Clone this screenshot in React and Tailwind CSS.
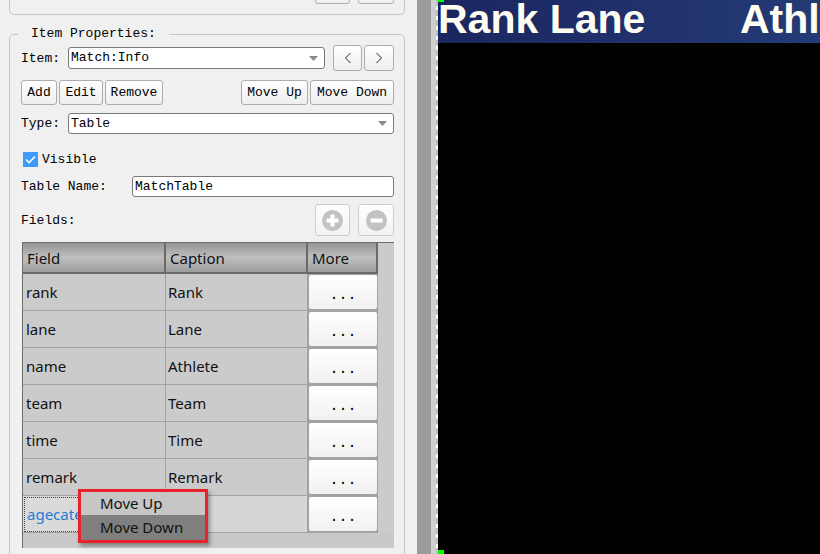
import React from 'react';

const mono = "font-['Liberation_Mono',monospace] text-[13px] text-black";
const ui = "font-['Noto_Sans',sans-serif]";

const Btn = ({ className = '', children }) => (
    <button className={`flex items-center justify-center rounded-[3px] border border-[#adadad] bg-linear-to-b from-[#fefefe] to-[#efefef] ${mono} ${className}`}>
        {children}
    </button>
);

const Combo = ({ value, className = '' }) => (
    <div className={`flex items-center rounded-[3px] border border-[#7a7a7a] bg-white pl-[2px] pr-[6px] ${className}`}>
        <span className={`flex-1 ${mono}`}>{value}</span>
        <svg width="9" height="5" viewBox="0 0 9 5"><path d="M0 0h9L4.5 5z" fill="#8a8a8a" /></svg>
    </div>
);

const RoundIcon = ({ plus }) => (
    <svg width="21" height="21" viewBox="0 0 21 21">
        <circle cx="10.5" cy="10.5" r="10.5" fill="#c2c2c2" />
        <rect x="4.5" y="8.5" width="12" height="4" fill="#fff" />
        {plus && <rect x="8.5" y="4.5" width="4" height="12" fill="#fff" />}
    </svg>
);

const fields = [
    ['rank', 'Rank'],
    ['lane', 'Lane'],
    ['name', 'Athlete'],
    ['team', 'Team'],
    ['time', 'Time'],
    ['remark', 'Remark'],
];

const MoreCell = () => (
    <div className="h-[37px] bg-[#a3a3a3] p-[1px] pb-[2px]">
        <div className="flex h-full items-center justify-center rounded-[2px] bg-linear-to-b from-white to-[#f1f1f1] pt-[6px]">
            <span className="font-['Liberation_Mono',monospace] text-[15px] leading-none text-black">...</span>
        </div>
    </div>
);

const FieldsTable = () => (
    <div className={`ml-[1px] mt-[6px] h-[306px] w-[372px] border-l border-t border-[#6e6e6e] bg-[#c9c9c9] ${ui}`}>
        <div className="grid grid-cols-[143px_142px_70px_1fr]">
            {['Field', 'Caption', 'More'].map((h) => (
                <div key={h} className="flex h-[31px] items-center border-r-2 border-b-2 border-[#6a6a6a] bg-linear-to-b from-[#959595] via-[#bfbfbf] to-[#9d9d9d] pl-[4px] pt-[2px] text-[15px] text-[#111]">
                    {h}
                </div>
            ))}
            <div className="h-[31px] bg-[#cbcbcb]" />
            {fields.map(([f, c]) => (
                <React.Fragment key={f}>
                    <div className="flex h-[37px] items-center border-r border-b border-[#a2a2a2] bg-[#cbcbcb] pl-[3px] text-[15px] text-[#111]">{f}</div>
                    <div className="flex h-[37px] items-center border-r border-b border-[#a2a2a2] bg-[#cbcbcb] pl-[2px] text-[15px] text-[#111]">{c}</div>
                    <MoreCell />
                    <div className="h-[37px] bg-[#cbcbcb]" />
                </React.Fragment>
            ))}
            <div className="flex h-[37px] items-center border-b border-[#a2a2a2] bg-[#dadada] pl-[1px]">
                <div className="flex h-[35px] w-full items-center border border-dotted border-[#444] pl-[2px] text-[15px] text-[#1f7ad2]">agecategory</div>
            </div>
            <div className="h-[37px] border-r border-b border-[#a2a2a2] bg-[#d6d6d6]" />
            <MoreCell />
            <div className="h-[37px] bg-[#cbcbcb]" />
        </div>
    </div>
);

const LeftPanel = () => (
    <div className="relative h-full w-[406px] shrink-0 overflow-hidden bg-[#f0f0f0]">
        <div className="ml-[9px] flex h-[15px] w-[396px] justify-end gap-[8px] overflow-hidden rounded-b-[5px] border-x border-b border-[#c6c6c6] pr-[10px]">
            <Btn className="-mt-[26px] h-[30px] w-[35px]" />
            <Btn className="-mt-[26px] h-[30px] w-[36px]" />
        </div>

        <fieldset className="ml-[9px] mt-[10px] w-[396px] rounded-[5px] border border-[#c6c6c6] pb-[40px] pl-[11px] pr-[10px]">
            <legend className={`-ml-[3px] px-[13px] leading-[18px] ${mono}`}>Item Properties:</legend>

            <div className="mt-[2px] flex h-[26px] items-center">
                <span className={`w-[47px] pt-[1px] ${mono}`}>Item:</span>
                <Combo value="Match:Info" className="h-[22px] w-[257px]" />
                <Btn className="ml-[8px] h-[26px] w-[29px]">
                    <svg width="8" height="12" viewBox="0 0 8 12"><path d="M6.5 1L1.5 6l5 5" fill="none" stroke="#222" /></svg>
                </Btn>
                <Btn className="ml-[2px] h-[26px] w-[30px]">
                    <svg width="8" height="12" viewBox="0 0 8 12"><path d="M1.5 1l5 5-5 5" fill="none" stroke="#222" /></svg>
                </Btn>
            </div>

            <div className="mt-[9px] flex h-[25px] gap-[2px]">
                <Btn className="w-[36px] pt-[1px]">Add</Btn>
                <Btn className="w-[44px] pt-[1px]">Edit</Btn>
                <Btn className="w-[58px] pt-[1px]">Remove</Btn>
                <div className="flex-1" />
                <Btn className="w-[67px] pt-[1px]">Move Up</Btn>
                <Btn className="w-[84px] pt-[1px]">Move Down</Btn>
            </div>

            <div className="mt-[8px] flex h-[21px] items-center">
                <span className={`w-[47px] pt-[1px] ${mono}`}>Type:</span>
                <Combo value="Table" className="h-[21px] flex-1" />
            </div>

            <div className="mt-[16px] flex h-[18px] items-center pl-[2px]">
                <div className="flex h-[15px] w-[15px] items-center justify-center bg-[#3d9bf9]">
                    <svg width="11" height="9" viewBox="0 0 11 9"><path d="M1 4.5l3 3L10 1.5" fill="none" stroke="#fff" strokeWidth="1.6" /></svg>
                </div>
                <span className={`ml-[4px] pt-[1px] ${mono}`}>Visible</span>
            </div>

            <div className="mt-[8px] flex h-[21px] items-center">
                <span className={`w-[111px] pt-[1px] ${mono}`}>Table Name:</span>
                <div className={`flex h-[21px] flex-1 items-center rounded-[3px] border border-[#7a7a7a] bg-white pl-[2px] ${mono}`}>MatchTable</div>
            </div>

            <div className="mt-[7px] flex h-[32px] items-center">
                <span className={`flex-1 pt-[1px] ${mono}`}>Fields:</span>
                <Btn className="h-[32px] w-[35px] border-[#cdcdcd] from-[#f7f7f7] to-[#f3f3f3]"><RoundIcon plus /></Btn>
                <Btn className="ml-[8px] h-[32px] w-[36px] border-[#cdcdcd] from-[#f7f7f7] to-[#f3f3f3]"><RoundIcon /></Btn>
            </div>

            <FieldsTable />
        </fieldset>

        <div className={`absolute left-[78px] top-[489px] w-[130px] border-[3px] border-[#e8212b] shadow-[2px_3px_4px_rgba(0,0,0,0.35)] ${ui}`}>
            <div className="flex h-[23px] items-center bg-[#c6c6c6] pl-[19px] text-[15px] text-[#111]">Move Up</div>
            <div className="flex h-[25px] items-center bg-[#7f7f7f] pl-[19px] text-[15px] text-[#111]">Move Down</div>
        </div>
    </div>
);

const App = () => (
    <div className="flex h-[554px] w-[820px] overflow-hidden bg-[#f0f0f0]">
        <LeftPanel />
        <div className="w-[11px] shrink-0 bg-[#f0f0f0]" />
        <div className="w-[14px] shrink-0 bg-[#9b9b9b]" />
        <div className="w-[5px] shrink-0 bg-[#cfcfcf]" />
        <div className="relative w-[2px] shrink-0 border-l-2 border-dashed border-[#bdbdbd] bg-white">
            <div className="absolute left-0 top-0 h-[2px] w-[6px] bg-[#00ff00]" />
            <div className="absolute bottom-0 left-0 h-[4px] w-[6px] bg-[#00ff00]" />
        </div>
        <div className="flex-1 overflow-hidden bg-black">
            <div className="flex h-[43px] whitespace-nowrap bg-linear-to-r from-[#1b2660] to-[#243b75] font-['Liberation_Sans',Arial,sans-serif] text-[41px] font-bold leading-[39px] text-[#fffdf2]">
                <span className="w-[302px] shrink-0">Rank Lane</span>
                <span>Athlete</span>
            </div>
        </div>
    </div>
);

export default App;
